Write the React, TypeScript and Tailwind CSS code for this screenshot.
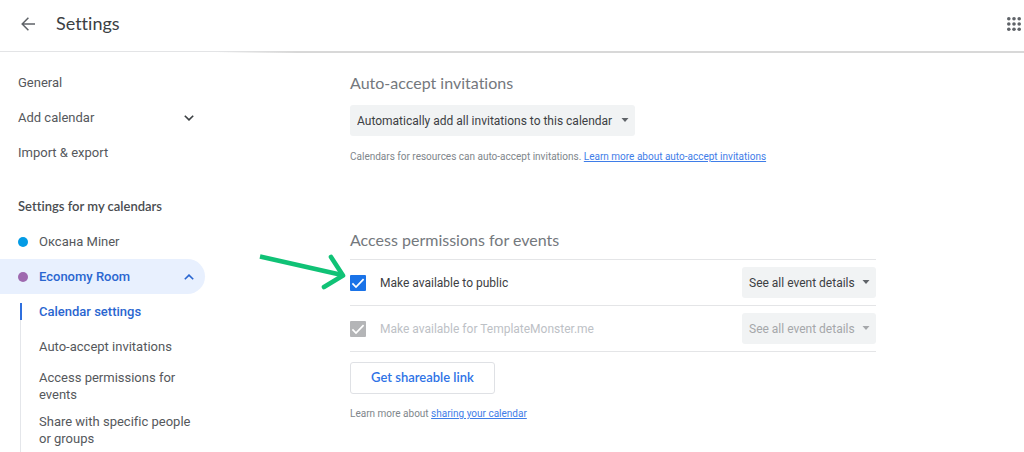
import React, { FC } from "react";

type SelectProps = {
  id: string;
  label: string;
  value: string;
  className?: string;
  disabled?: boolean;
};

const Select: FC<SelectProps> = ({ id, label, value, className, disabled }) => {
  return (
    <div className={`relative shrink-0 ${className ?? ""}`}>
      <select
        id={id}
        aria-label={label}
        disabled={disabled}
        className="block h-[31px] w-full appearance-none rounded-[3px] bg-[#f1f3f4] pl-[7px] text-[12px] leading-4 text-[#3c4043] disabled:text-[#a5a7aa] disabled:opacity-100"
      >
        <option>{value}</option>
      </select>
      <svg
        viewBox="0 0 8 4"
        className={`pointer-events-none absolute right-[6px] top-[13px] h-1 w-2 ${
          disabled ? "text-[#a5a7aa]" : "text-[#5f6368]"
        }`}
      >
        <path d="M0.5 0h7L4 4z" fill="currentColor" />
      </svg>
    </div>
  );
};

type PermissionProps = {
  id: string;
  label: string;
  disabled?: boolean;
};

const Permission: FC<PermissionProps> = ({ id, label, disabled }) => {
  return (
    <div className="flex items-center justify-between border-b border-[#e4e5e7] py-[7px]">
      <div className="flex items-center">
        <span className="relative flex h-4 w-4">
          <input
            id={id}
            type="checkbox"
            defaultChecked
            disabled={disabled}
            className="h-4 w-4 appearance-none rounded-[1px] bg-[#1a73e8] disabled:bg-[#b4b5b7]"
          />
          <svg
            viewBox="0 0 16 16"
            fill="none"
            className="pointer-events-none absolute inset-0 h-4 w-4"
          >
            <path d="M2.4 8.4L6 12L13.6 4.2" stroke="#fff" strokeWidth="1.7" />
          </svg>
        </span>
        <label
          htmlFor={id}
          className={`pl-[14px] text-[12px] leading-4 ${
            disabled ? "text-[#bdc1c6]" : "text-[#3c4043]"
          }`}
        >
          {label}
        </label>
      </div>
      <Select
        id={`${id}-level`}
        label={`${label} access level`}
        value="See all event details"
        className="w-[134px]"
        disabled={disabled}
      />
    </div>
  );
};

const Chevron: FC<{ up?: boolean }> = ({ up }) => {
  return (
    <svg viewBox="0 0 10 6" fill="none" className="h-[6px] w-[10px]">
      <path
        d={up ? "M0.8 5.3L5 1.1L9.2 5.3" : "M0.8 0.7L5 4.9L9.2 0.7"}
        stroke="currentColor"
        strokeWidth="1.6"
      />
    </svg>
  );
};

const Sidebar: FC = () => {
  return (
    <nav className="flex w-[205px] shrink-0 flex-col pt-[13px] text-[13px] leading-[17px] text-[#55585c]">
      <a href="#general" className="flex h-[35px] items-center pl-[18px]">
        General
      </a>
      <button
        type="button"
        className="flex h-[35px] items-center justify-between pl-[18px] pr-[11px]"
      >
        Add calendar
        <span className="text-[#3c4043]">
          <Chevron />
        </span>
      </button>
      <a href="#import" className="flex h-[35px] items-center pl-[18px]">
        Import &amp; export
      </a>

      <h2 className="mt-[19px] flex h-[35px] items-center pl-[18px] font-['Lato',sans-serif] text-[13px] font-semibold text-[#4a4d51]">
        Settings for my calendars
      </h2>
      <button type="button" className="flex h-[35px] items-center pl-[18px]">
        <span className="mr-[11px] h-[10px] w-[10px] rounded-full bg-[#039be5]" />
        Оксана Miner
      </button>
      <button
        type="button"
        className="flex h-[35px] items-center rounded-r-full bg-[#e8f0fe] pl-[18px] pr-[11px] font-medium text-[#2a66d0]"
      >
        <span className="mr-[11px] h-[10px] w-[10px] rounded-full bg-[#9e69af]" />
        Economy Room
        <span className="ml-auto">
          <Chevron up />
        </span>
      </button>

      <ul className="ml-5 mt-[9px] grow border-l border-[#e4e6ea]">
        <li className="pb-[9px]">
          <a
            href="#calendar"
            className="-ml-px block border-l-2 border-[#2f6fde] pl-[17px] font-medium text-[#2a66d0]"
          >
            Calendar settings
          </a>
        </li>
        <li className="flex h-[35px] items-center pl-[18px]">
          <a href="#auto-accept">Auto-accept invitations</a>
        </li>
        <li className="py-[5px] pl-[18px] pr-2">
          <a href="#access">Access permissions for events</a>
        </li>
        <li className="py-[5px] pl-[18px] pr-2">
          <a href="#share">Share with specific people or groups</a>
        </li>
      </ul>
    </nav>
  );
};

const App: FC = () => {
  return (
    <div className="flex min-h-screen flex-col bg-white font-['Roboto',sans-serif] [font-variant-ligatures:none]">
      <header className="relative flex h-[52px] items-center justify-between border-b border-[#e3e4e6] pb-1 pl-[21px] pr-[3px]">
        <div className="flex items-center">
          <button type="button" aria-label="Back">
            <svg viewBox="0 0 14 14" fill="none" className="h-[14px] w-[14px]">
              <path
                d="M14 7H1.4M7.4 0.8L1.2 7L7.4 13.2"
                stroke="#5f6368"
                strokeWidth="1.5"
              />
            </svg>
          </button>
          <h1 className="pl-[21px] font-['Lato',sans-serif] text-[18px] text-[#3c4043]">
            Settings
          </h1>
        </div>
        <button type="button" aria-label="Apps">
          <svg viewBox="0 0 14 14" fill="#5f6368" className="h-[14px] w-[14px]">
            {[1.8, 7, 12.2].map((y) =>
              [1.8, 7, 12.2].map((x) => (
                <circle key={`${x}-${y}`} cx={x} cy={y} r="1.8" />
              ))
            )}
          </svg>
        </button>
        {/* scroll shadow over the content column */}
        <div className="absolute -bottom-[2px] left-[216px] right-0 h-[2px] bg-linear-to-r from-transparent to-[#d8d8d8] to-10%" />
      </header>

      <div className="flex grow">
        <Sidebar />
        <main className="ml-[145px] min-w-0 max-w-[526px] grow pt-5">
          <section>
            <h2 className="font-['Lato',sans-serif] text-[16px] leading-[22px] text-[#74787d]">
              Auto-accept invitations
            </h2>
            <Select
              id="auto"
              label="Auto-accept invitations"
              value="Automatically add all invitations to this calendar"
              className="mt-[11px] w-[285px]"
            />
            <p className="mt-[13px] text-[10px] leading-4 text-[#80868b]">
              Calendars for resources can auto-accept invitations.{" "}
              <a href="#learn" className="text-[#3f7de8] underline">
                Learn more about auto-accept invitations
              </a>
            </p>
          </section>

          <section className="relative mt-16">
            <h2 className="border-b border-[#e4e5e7] pb-2 font-['Lato',sans-serif] text-[16px] leading-[22px] text-[#74787d]">
              Access permissions for events
            </h2>
            <Permission id="public" label="Make available to public" />
            <Permission
              id="domain"
              label="Make available for TemplateMonster.me"
              disabled
            />
            <button
              type="button"
              className="mt-[10px] h-8 rounded-[3px] border border-[#dfe1e5] px-5 font-['Lato',sans-serif] text-[13px] font-semibold text-[#2f73e6]"
            >
              Get shareable link
            </button>
            <p className="mt-3 text-[10px] leading-4 text-[#80868b]">
              Learn more about{" "}
              <a href="#sharing" className="text-[#3f7de8] underline">
                sharing your calendar
              </a>
            </p>
            {/* pointer to the public checkbox */}
            <svg
              viewBox="0 0 90 40"
              fill="none"
              className="pointer-events-none absolute -left-[92px] top-[23px] h-10 w-[90px]"
            >
              <path d="M2 4.5L84 23" stroke="#10c276" strokeWidth="4.6" />
              <path
                d="M73 5L85 23.5L66 35"
                stroke="#10c276"
                strokeWidth="4.6"
                strokeLinecap="round"
                strokeLinejoin="round"
              />
            </svg>
          </section>
        </main>
      </div>
    </div>
  );
};

export default App;
